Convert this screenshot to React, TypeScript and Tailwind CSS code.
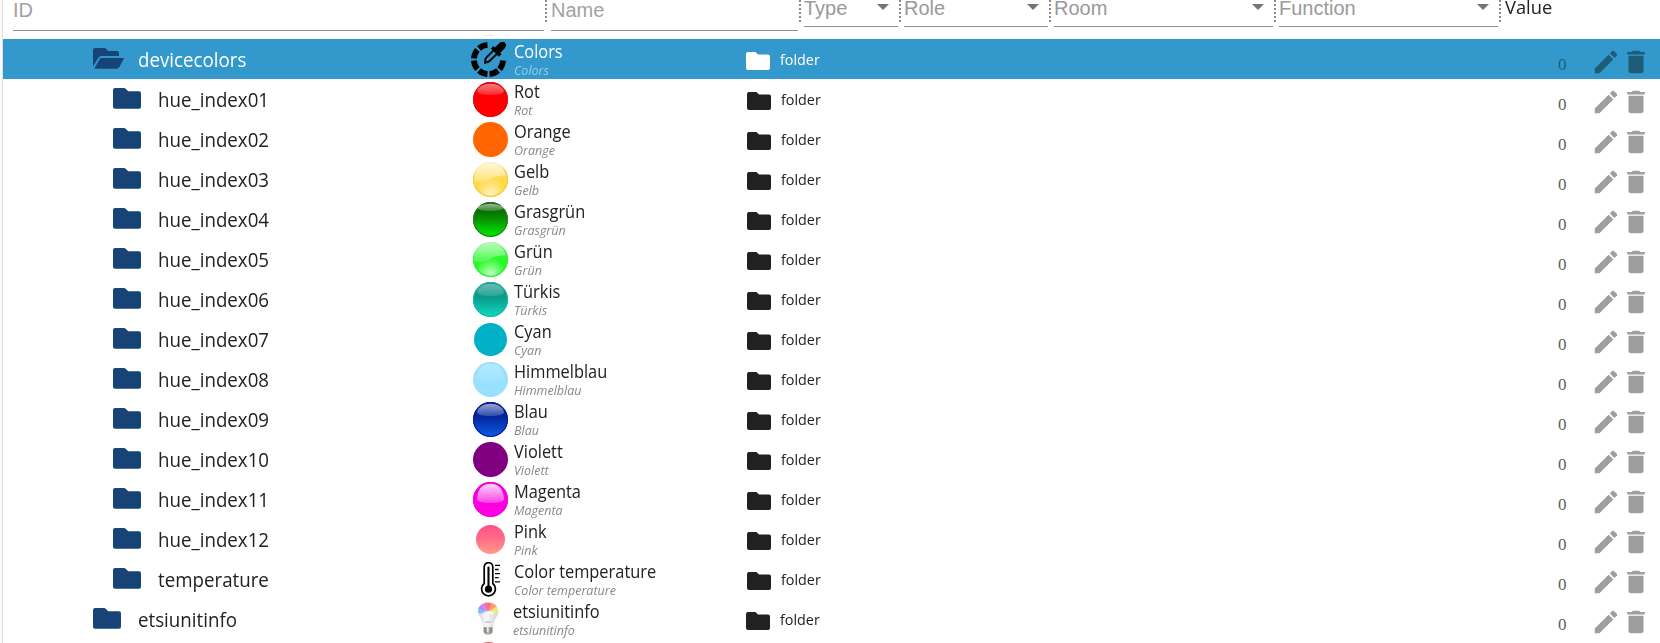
import React from 'react';

type Ball = { base: string[]; rim?: string; gloss?: number; glow?: string; r?: number; glossH?: number };
type Row = { id: string; name: string; icon: 'picker' | 'thermo' | 'bulb' | 'ball'; ball?: Ball; level: number; open?: boolean };

const rows: Row[] = [
  { id: 'devicecolors', name: 'Colors', icon: 'picker', level: 0, open: true },
  { id: 'hue_index01', name: 'Rot', icon: 'ball', level: 1, ball: { base: ['#f00000', '#ff0000', '#ff0000'], rim: '#d80c1c', gloss: 0.5, glossH: 5 } },
  { id: 'hue_index02', name: 'Orange', icon: 'ball', level: 1, ball: { base: ['#ff6600', '#ff6600', '#ff6600'] } },
  { id: 'hue_index03', name: 'Gelb', icon: 'ball', level: 1, ball: { base: ['#ffe27a', '#ffdc50', '#ffd21e'], rim: '#f0cc3c', gloss: 0.75, glow: '#fff3cc' } },
  { id: 'hue_index04', name: 'Grasgrün', icon: 'ball', level: 1, ball: { base: ['#0a5000', '#078a00', '#00f000'], rim: '#2c7426', gloss: 0.6, glossH: 1 } },
  { id: 'hue_index05', name: 'Grün', icon: 'ball', level: 1, ball: { base: ['#5cf85c', '#2cf82c', '#10ff10'], rim: '#30ee40', gloss: 0.6, glow: '#c8ffc8' } },
  { id: 'hue_index06', name: 'Türkis', icon: 'ball', level: 1, ball: { base: ['#0c8c7c', '#0a9c8a', '#10dcc0'], rim: '#14b8a4', gloss: 0.4, glossH: 6 } },
  { id: 'hue_index07', name: 'Cyan', icon: 'ball', level: 1, ball: { base: ['#00b0c4', '#00b0c4', '#00b0c4'], r: 16.5 } },
  { id: 'hue_index08', name: 'Himmelblau', icon: 'ball', level: 1, ball: { base: ['#98e0ff', '#98e0ff', '#98e0ff'], gloss: 0.28, glossH: 12 } },
  { id: 'hue_index09', name: 'Blau', icon: 'ball', level: 1, ball: { base: ['#001c80', '#0428a0', '#0c5cea'], rim: '#001c98', gloss: 0.6, glossH: 6 } },
  { id: 'hue_index10', name: 'Violett', icon: 'ball', level: 1, ball: { base: ['#800080', '#800080', '#800080'] } },
  { id: 'hue_index11', name: 'Magenta', icon: 'ball', level: 1, ball: { base: ['#f400dc', '#fa00e0', '#ff00e4'], rim: '#f000d8', gloss: 0.85, glossH: 13 } },
  { id: 'hue_index12', name: 'Pink', icon: 'ball', level: 1, ball: { base: ['#ff5088', '#ff6a88', '#ff9c88'], r: 14.5 } },
  { id: 'temperature', name: 'Color temperature', icon: 'thermo', level: 1 },
  { id: 'etsiunitinfo', name: 'etsiunitinfo', icon: 'bulb', level: 0 },
];

function BallIcon({ id, ball }: { id: string; ball: Ball }) {
  const r = ball.r ?? 17.5;
  const h = ball.glossH ?? 0;
  return (
    <svg viewBox="0 0 35 35" className="size-[35px]">
      <defs>
        <linearGradient id={`${id}-b`} x1="0" y1="0" x2="0" y2="1">
          <stop offset="0" stopColor={ball.base[0]} />
          <stop offset=".45" stopColor={ball.base[1]} />
          <stop offset="1" stopColor={ball.base[2]} />
        </linearGradient>
        <linearGradient id={`${id}-g`} x1="0" y1="0" x2="0" y2="1">
          <stop offset="0" stopColor="#fff" stopOpacity={ball.gloss ?? 0} />
          <stop offset="1" stopColor="#fff" stopOpacity={(ball.gloss ?? 0) * 0.3} />
        </linearGradient>
        <radialGradient id={`${id}-w`} cx=".5" cy=".95" r=".5">
          <stop offset="0" stopColor={ball.glow ?? '#fff'} />
          <stop offset="1" stopColor={ball.glow ?? '#fff'} stopOpacity="0" />
        </radialGradient>
      </defs>
      <circle cx="17.5" cy="17.5" r={r} fill={`url(#${id}-b)`} />
      {ball.glow && <circle cx="17.5" cy="17.5" r="16.5" fill={`url(#${id}-w)`} />}
      {ball.rim && <circle cx="17.5" cy="17.5" r="16.9" fill="none" stroke={ball.rim} strokeWidth="1.1" />}
      {ball.gloss && (ball.glow ? (
        <path d="M1.8 19.5A15.8 15.8 0 1 1 32.6 13.5C27 13 22 14.5 17 17S8 20.5 1.8 19.5Z" fill={`url(#${id}-g)`} />
      ) : (
        <path d={`M4 ${h + 4}C5 5 11 1.8 17.5 1.8S30 5 31 ${h + 4}C31 ${h + 7} 24 ${h + 8} 17.5 ${h + 8}S4 ${h + 7} 4 ${h + 4}Z`} fill={`url(#${id}-g)`} />
      ))}
    </svg>
  );
}

function PickerIcon() {
  return (
    <svg viewBox="0 0 35 35" className="size-[35px]">
      <mask id="pick-gap" maskUnits="userSpaceOnUse" x="-1" y="-1" width="37" height="37">
        <path d="M-1-1H17V18H36V36H-1Z" fill="#fff" />
      </mask>
      <circle cx="17.5" cy="17.5" r="14.6" fill="none" stroke="#000" strokeWidth="5.8" strokeDasharray="9.3 2.167" strokeDashoffset="-1.08" pathLength="91.735" mask="url(#pick-gap)" />
      <path d="M34.2.9c1.4 1.5.9 4-.6 5.6l-4.3 4.2 1.3 1.5-2.6 2.5-8.2-8.1 2.6-2.6 1.5 1.5L28.2 1.2c1.7-1.7 4.5-1.8 6-.3Z" />
      <path d="m22.3 8.7-7 7c-1.4 1.5-1 3.2-1.2 4.6.9 0 3.5-.2 4.5-1.3l7.4-7.2" fill="none" stroke="#000" strokeWidth="1.9" />
      <circle cx="14.2" cy="20.8" r="1.2" />
    </svg>
  );
}

function ThermoIcon() {
  return (
    <svg viewBox="0 0 35 35" className="size-[35px]" fill="none" stroke="#000">
      <path d="M11.2 21.5V5a4.3 4.3 0 0 1 8.6 0v16.5a6.9 6.9 0 1 1-8.6 0Z" strokeWidth="1.7" />
      <path d="M15.5 5.5V24" strokeWidth="2.1" strokeLinecap="round" />
      <circle cx="15.5" cy="27.2" r="3.6" fill="#000" stroke="none" />
      <path d="M22 3.4h5M22 7.5h3.6M22 11.6h5M22 15.7h3.6M22 19.8h5" strokeWidth="1.3" />
    </svg>
  );
}

function BulbIcon() {
  return (
    <svg viewBox="0 0 35 35" className="size-[35px]">
      <defs>
        <linearGradient id="bulb-body">
          <stop offset="0" stopColor="#d4d4d4" />
          <stop offset=".4" stopColor="#fafafa" />
          <stop offset="1" stopColor="#d0d0d0" />
        </linearGradient>
        <clipPath id="bulb-clip"><path d="M5.8 10.2C6 4 10.2.5 16 .5S26.2 4 26.4 10.2C22 13 10 13 5.8 10.2Z" /></clipPath>
      </defs>
      <path d="M5.8 9c0 5 4.500 7 5.200 16h10.200C22 16 26.400 14 26.400 9Z" fill="url(#bulb-body)" />
      <g clipPath="url(#bulb-clip)">
        <path d="M5 0H27V14H5Z" fill="#f4e8f4" />
        <path d="M16 10 4-1h10Z" fill="#e27cf2" />
        <path d="M16 10 12-1h10Z" fill="#fa7080" />
        <path d="M16 10 20-1l9 4Z" fill="#ff9a70" />
        <path d="M16 10 28 2v7Z" fill="#f6e274" />
        <path d="M16 10 28 7v6H19Z" fill="#d4f490" />
        <path d="M16 10 4-1v7Z" fill="#b484fa" />
        <path d="M16 10 4 5v8h9Z" fill="#8cb8ff" />
        <ellipse cx="16" cy="12" rx="6" ry="3" fill="#fff" opacity=".75" />
      </g>
      <path d="M13 20h6" stroke="#b4b4b4" />
      <path d="M11.5 25h9.300v5l-2 2.500h-5.300l-2-2.500Z" fill="#b0aaa2" />
      <path d="M13 25.500v5.500M19 25.500v5.500" stroke="#777" strokeWidth="1.2" />
      <path d="M15.800 25v5" stroke="#eee" strokeWidth="1.5" />
    </svg>
  );
}

function RowIcon({ row }: { row: Row }) {
  if (row.icon === 'picker') return <PickerIcon />;
  if (row.icon === 'thermo') return <ThermoIcon />;
  if (row.icon === 'bulb') return <BulbIcon />;
  return <BallIcon id={row.id} ball={row.ball!} />;
}

function TreeFolder({ open }: { open?: boolean }) {
  return open ? (
    <svg viewBox="0 0 31 21" className="h-[21px] w-[31px]" fill="#164477">
      <path d="M0 18.500V2Q0 0 2 0H11.300Q12.300 0 13 .8L15.200 3H24Q26 3 26 5V8H8.500Q6.500 8 5.400 9.800Z" />
      <path d="M1.300 20.400 7 10.500Q7.400 9.900 8.200 9.900H30Q31.400 9.900 30.800 11.100L26.300 19Q25.200 20.800 23.400 20.800H1.600Q1 20.800 1.300 20.400Z" />
    </svg>
  ) : (
    <svg viewBox="0 0 28 21" className="h-[21px] w-[28px]" fill="#164477">
      <path d="M2 0H11Q12 0 12.700.7L15.200 3.200H26Q28 3.200 28 5.200V18.800Q28 20.800 26 20.800H2Q0 20.800 0 18.800V2Q0 0 2 0Z" />
    </svg>
  );
}

function ObjectRow({ row }: { row: Row }) {
  const sel = row.open;
  return (
    <div className={`flex h-10 shrink-0 ${sel ? 'bg-[#3399cc] text-white' : 'text-[#212121]'}`}>
      <div className={`flex shrink-0 ${row.level ? 'w-[470px] pl-[110px]' : sel ? 'w-[468px] pl-[90px]' : 'w-[469px] pl-[90px]'}`}>
        <div className="w-[44.5px] shrink-0 pt-[9px]">
          <TreeFolder open={row.open} />
        </div>
        <div className="origin-left scale-x-[.96] pt-px text-[19.5px] leading-10">{row.id}</div>
      </div>
      <div className={`flex shrink-0 ${sel ? 'w-[275px]' : 'w-[274px]'}`}>
        <div className={`shrink-0 pt-[3px] ${sel ? 'w-[42.5px]' : 'w-[41px]'}`}>
          <RowIcon row={row} />
        </div>
        <div className="whitespace-nowrap">
          <div className="origin-left scale-x-[.95] text-[17.25px] leading-[25px]">{row.name}</div>
          <div className={`origin-left scale-x-[.98] text-[12.75px] leading-3 italic ${sel ? 'text-[#99cce6]' : 'text-[#888]'}`}>{row.name}</div>
        </div>
      </div>
      <div className="w-[34px] shrink-0 pt-[13px]">
        <svg viewBox="0 0 24 18" className="h-[18px] w-6" fill="currentColor">
          <path d="M2 0H9.400L12 2.500H22Q24 2.500 24 4.500V16Q24 18 22 18H2Q0 18 0 16V2Q0 0 2 0Z" />
        </svg>
      </div>
      <div className="origin-left scale-x-[.99] pt-px text-[14.5px] leading-10">folder</div>
      <div className="ml-auto flex pr-[9px]">
        <span className={`w-[33px] pt-[11px] font-['Liberation_Serif',serif] text-[17px] leading-[30px] ${sel ? 'text-[#1f5c7a]' : 'text-[#606060]'}`}>0</span>
        <div className={`flex pt-2 ${sel ? 'text-[#1f5c7a]' : 'text-[#9e9e9e]'}`}>
          <svg viewBox="0 0 24 24" className="size-[30px]" fill="currentColor"><path d="M3 17.250V21h3.750L17.810 9.940l-3.750-3.750L3 17.250zM20.710 7.040c.39-.39.39-1.020 0-1.410l-2.340-2.340c-.39-.39-1.020-.39-1.410 0l-1.830 1.830 3.750 3.750 1.830-1.830z" /></svg>
          <svg viewBox="0 0 24 24" className="size-[30px]" fill="currentColor"><path d="M6 19c0 1.100.9 2 2 2h8c1.100 0 2-.9 2-2V7H6v12zM19 4h-3.500l-1-1h-5l-1 1H5v2h14V4z" /></svg>
        </div>
      </div>
    </div>
  );
}

function Divider() {
  return <div className="h-[22px] w-0 shrink-0 border-l-2 border-dotted border-[#8a8a8a]" />;
}

function Select({ label, className }: { label: string; className: string }) {
  return (
    <div className={`mr-px ml-[3px] flex h-[27px] shrink-0 justify-between border-b border-[#8f8f8f] pr-[9px] text-[#999] ${className}`}>
      <span className="-mt-[4px] h-6 leading-6">{label}</span>
      <svg viewBox="0 0 12 6" className="mt-[4px] h-[6px] w-3" fill="#757575"><path d="M0 0H12L6 6Z" /></svg>
    </div>
  );
}

export default function App() {
  return (
    <div className="flex h-[643px] w-[1660px] overflow-hidden bg-white font-['Open_Sans','Noto_Sans',sans-serif]">
      <div className="w-[3px] shrink-0 border-r border-[#e0e0e0] bg-[#fafafa]" />
      <div className="relative flex min-w-0 flex-1 flex-col">
        <div className="absolute top-[35px] left-[482px] h-px w-[9px] bg-[#e8e8e8]" />
        <div className="flex h-[39px] shrink-0 pl-[10px] font-['Liberation_Sans',Arial,sans-serif] text-[20px]">
          <div className="h-[31px] w-[531px] shrink-0 border-b border-[#8f8f8f] leading-[20px] text-[#a2a2a2]">ID</div>
          <div className="w-px shrink-0" />
          <Divider />
          <div className="mr-px ml-1 h-[31px] w-[247px] shrink-0 border-b border-[#8f8f8f] leading-[20px] text-[#a2a2a2]">Name</div>
          <Divider />
          <Select label="Type" className="w-[94px]" />
          <Divider />
          <Select label="Role" className="w-[144px]" />
          <Divider />
          <Select label="Room" className="w-[219px]" />
          <Divider />
          <Select label="Function" className="w-[219px]" />
          <Divider />
          <div className="-mt-[5px] ml-1 h-6 origin-left scale-x-[.99] font-['Open_Sans','Noto_Sans',sans-serif] text-[18.5px] leading-6 text-[#212121]">Value</div>
        </div>
        {rows.map((row) => <ObjectRow key={row.id} row={row} />)}
        <div className="h-10 shrink-0 pt-[3px] pl-[468px]">
          <BallIcon id="next" ball={{ base: ['#ff6070', '#ff6070', '#ff6070'] }} />
        </div>
      </div>
    </div>
  );
}
